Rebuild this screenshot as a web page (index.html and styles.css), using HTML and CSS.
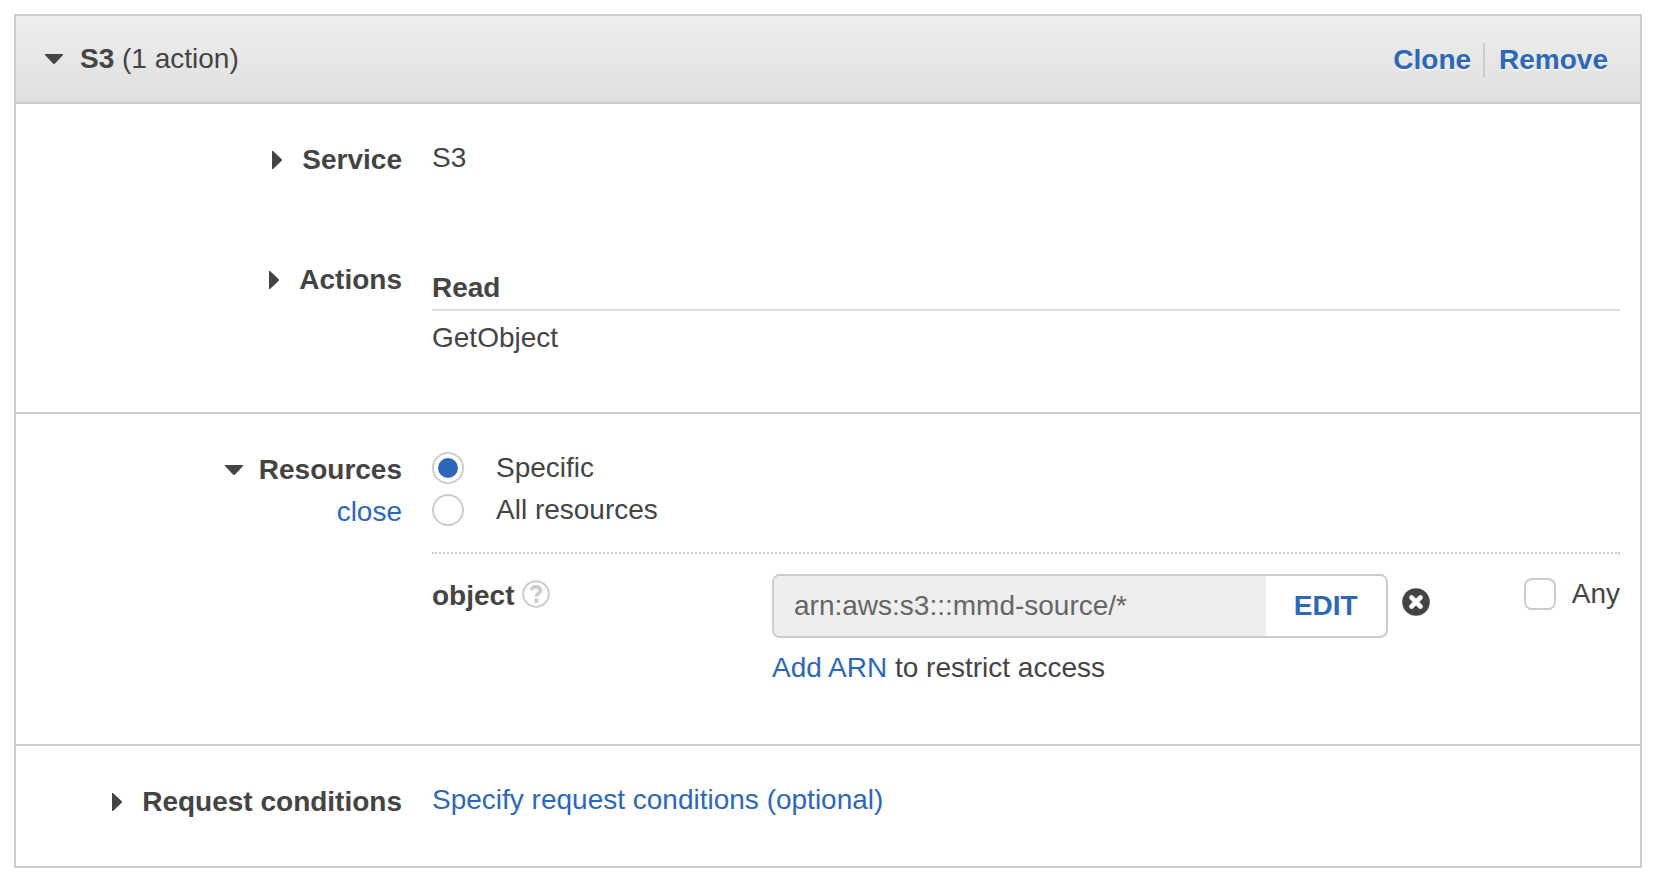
FILE: index.html
```html
<!DOCTYPE html>
<html lang="en">
<head>
<meta charset="utf-8">
<title>Policy editor</title>
<link rel="stylesheet" href="styles.css">
</head>
<body>
<main class="panel">
  <header class="panel-header">
    <button type="button" class="toggle" aria-expanded="true">
      <svg class="caret-down" viewBox="0 0 18 10" aria-hidden="true"><path d="M0 0h18v1L10 9.500Q9 10.300 8 9.500L0 1z"/></svg>
      <span><strong>S3</strong> (1 action)</span>
    </button>
    <nav class="header-actions">
      <a href="#clone">Clone</a>
      <a href="#remove">Remove</a>
    </nav>
  </header>

  <section class="section section-summary">
    <div class="row">
      <div class="label">
        <button type="button" class="toggle toggle-label" aria-expanded="false">
          <svg class="caret-right" viewBox="0 0 10 18" aria-hidden="true"><path d="M0 0h1L9.500 8Q10.300 9 9.500 10L1 18H0z"/></svg>
          Service
        </button>
      </div>
      <div class="value">S3</div>
    </div>
    <div class="row">
      <div class="label">
        <button type="button" class="toggle toggle-label" aria-expanded="false">
          <svg class="caret-right" viewBox="0 0 10 18" aria-hidden="true"><path d="M0 0h1L9.500 8Q10.300 9 9.500 10L1 18H0z"/></svg>
          Actions
        </button>
      </div>
      <div class="value access">
        <h2 class="access-level">Read</h2>
        <div>GetObject</div>
      </div>
    </div>
  </section>

  <section class="section section-resources">
    <div class="row">
      <div class="label">
        <button type="button" class="toggle toggle-label" aria-expanded="true">
          <svg class="caret-down" viewBox="0 0 18 10" aria-hidden="true"><path d="M0 0h18v1L10 9.500Q9 10.300 8 9.500L0 1z"/></svg>
          Resources
        </button>
        <a href="#close">close</a>
      </div>
      <div class="value">
        <div class="choice">
          <input type="radio" class="radio" name="scope" id="scope-specific" checked>
          <label for="scope-specific">Specific</label>
        </div>
        <div class="choice">
          <input type="radio" class="radio" name="scope" id="scope-all">
          <label for="scope-all">All resources</label>
        </div>
        <div class="resource">
          <div class="resource-name">
            <label for="arn">object</label>
            <svg class="help" viewBox="0 0 28 28" role="img" aria-label="Help"><circle cx="14" cy="14" r="12.800" fill="none" stroke="#ccc" stroke-width="2"/><path d="M9.300 10.200C10.100 8 11.800 6.900 14.100 6.900c2.700 0 4.500 1.500 4.500 3.600 0 3.200-4.400 3-4.400 6.300" fill="none" stroke="#ccc" stroke-width="3.600"/><path d="M12.300 18.600h4v4h-4z" fill="#ccc"/></svg>
          </div>
          <div class="resource-arn">
            <div class="arn-line">
              <div class="arn-field">
                <input type="text" class="arn-input" id="arn" value="arn:aws:s3:::mmd-source/*" readonly>
                <button type="button" class="edit">EDIT</button>
              </div>
              <button type="button" class="remove" aria-label="Remove ARN">
                <svg viewBox="0 0 28 28" aria-hidden="true"><circle cx="14" cy="14" r="13.800" fill="#444"/><path d="M9.500 9.500l9 9M18.500 9.500l-9 9" stroke="#fff" stroke-width="4.600" stroke-linecap="round"/></svg>
              </button>
            </div>
            <div class="add-arn"><a href="#add-arn">Add ARN</a> to restrict access</div>
          </div>
          <div class="any">
            <input type="checkbox" class="checkbox" id="any">
            <label for="any">Any</label>
          </div>
        </div>
      </div>
    </div>
  </section>

  <section class="section section-conditions">
    <div class="row">
      <div class="label">
        <button type="button" class="toggle toggle-label" aria-expanded="false">
          <svg class="caret-right" viewBox="0 0 10 18" aria-hidden="true"><path d="M0 0h1L9.500 8Q10.300 9 9.500 10L1 18H0z"/></svg>
          Request conditions
        </button>
      </div>
      <div class="value"><a href="#conditions">Specify request conditions (optional)</a></div>
    </div>
  </section>
</main>
</body>
</html>
```
FILE: styles.css
```css
* {
  box-sizing: border-box;
}

body {
  margin: 0;
  padding: 14px 20px 20px 14px;
  background: #fff;
  color: #444;
  font: 28px/42px "Helvetica Neue", "Liberation Sans", Arial, sans-serif;
}

button,
input {
  margin: 0;
  color: inherit;
  font: inherit;
}

button {
  padding: 0;
  border: 0;
  background: none;
  cursor: pointer;
}

a {
  color: #2d68b8;
  text-decoration: none;
}

.panel {
  border: 2px solid #ccc;
}

.panel-header {
  display: flex;
  justify-content: space-between;
  padding: 22px 32px 22px 29px;
  background: linear-gradient(#eee, #dfdfdf);
}

.toggle {
  display: flex;
  align-items: center;
  gap: 17px;
}

.toggle-label {
  gap: 16px;
  font-weight: bold;
}

.toggle svg {
  fill: #444;
}

.caret-down {
  width: 18px;
  height: 10px;
}

.caret-right {
  width: 10px;
  height: 18px;
  margin-right: 4px;
}

.header-actions {
  display: flex;
  align-items: center;
  padding-top: 2px;
  font-weight: bold;
  text-shadow: 0 2px 0 #f4f4f4;
}

.header-actions a {
  line-height: 34px;
}

.header-actions a + a {
  margin-left: 12px;
  padding-left: 14px;
  border-left: 2px solid #ccc;
}

.section {
  padding: 33px 20px 0;
  border-top: 2px solid #ccc;
}

.section-summary {
  display: grid;
  gap: 76px;
  padding-bottom: 53px;
}

.section-resources {
  padding-bottom: 55px;
}

.section-conditions {
  padding-bottom: 43px;
}

.row {
  display: grid;
  grid-template-columns: 366px 1fr;
  gap: 30px;
}

.label {
  display: flex;
  flex-direction: column;
  align-items: flex-end;
  padding-top: 2px;
}

.access {
  padding-top: 10px;
}

.access-level {
  margin: 0 0 6px;
  border-bottom: 2px solid #ddd;
  font-size: 28px;
  line-height: 42px;
}

.choice {
  display: flex;
  align-items: center;
  gap: 32px;
}

.radio,
.checkbox {
  width: 32px;
  height: 32px;
  border: 2px solid #ccc;
  background: #fff;
  appearance: none;
}

.radio {
  padding: 4px;
  border-radius: 50%;
}

.radio:checked {
  background: #2d68b8 content-box;
}

.checkbox {
  border-radius: 8px;
}

.resource {
  display: grid;
  grid-template-columns: 340px 1fr auto;
  margin-top: 21px;
  padding-top: 19px;
  border-top: 2px dotted #ccc;
}

.resource-name {
  display: flex;
  align-items: flex-start;
  gap: 8px;
  padding-top: 2px;
  font-weight: bold;
}

.help {
  width: 28px;
  height: 28px;
  margin-top: 5px;
}

.resource-arn {
  padding-top: 1px;
}

.arn-line {
  display: flex;
  align-items: flex-start;
  gap: 14px;
  margin-right: 94px;
}

.arn-field {
  display: flex;
  flex: 1;
  height: 64px;
  border: 2px solid #ccc;
  border-radius: 8px;
  overflow: hidden;
}

.arn-input {
  flex: 1;
  min-width: 0;
  padding: 0 20px;
  border: 0;
  background: #eee;
  color: #666;
}

.edit {
  width: 120px;
  color: #2d68b8;
  font-weight: bold;
}

.remove {
  width: 28px;
  height: 28px;
  margin-top: 14px;
}

.remove svg {
  display: block;
}

.add-arn {
  margin-top: 9px;
}

.any {
  display: flex;
  align-items: center;
  align-self: start;
  gap: 16px;
}
```
